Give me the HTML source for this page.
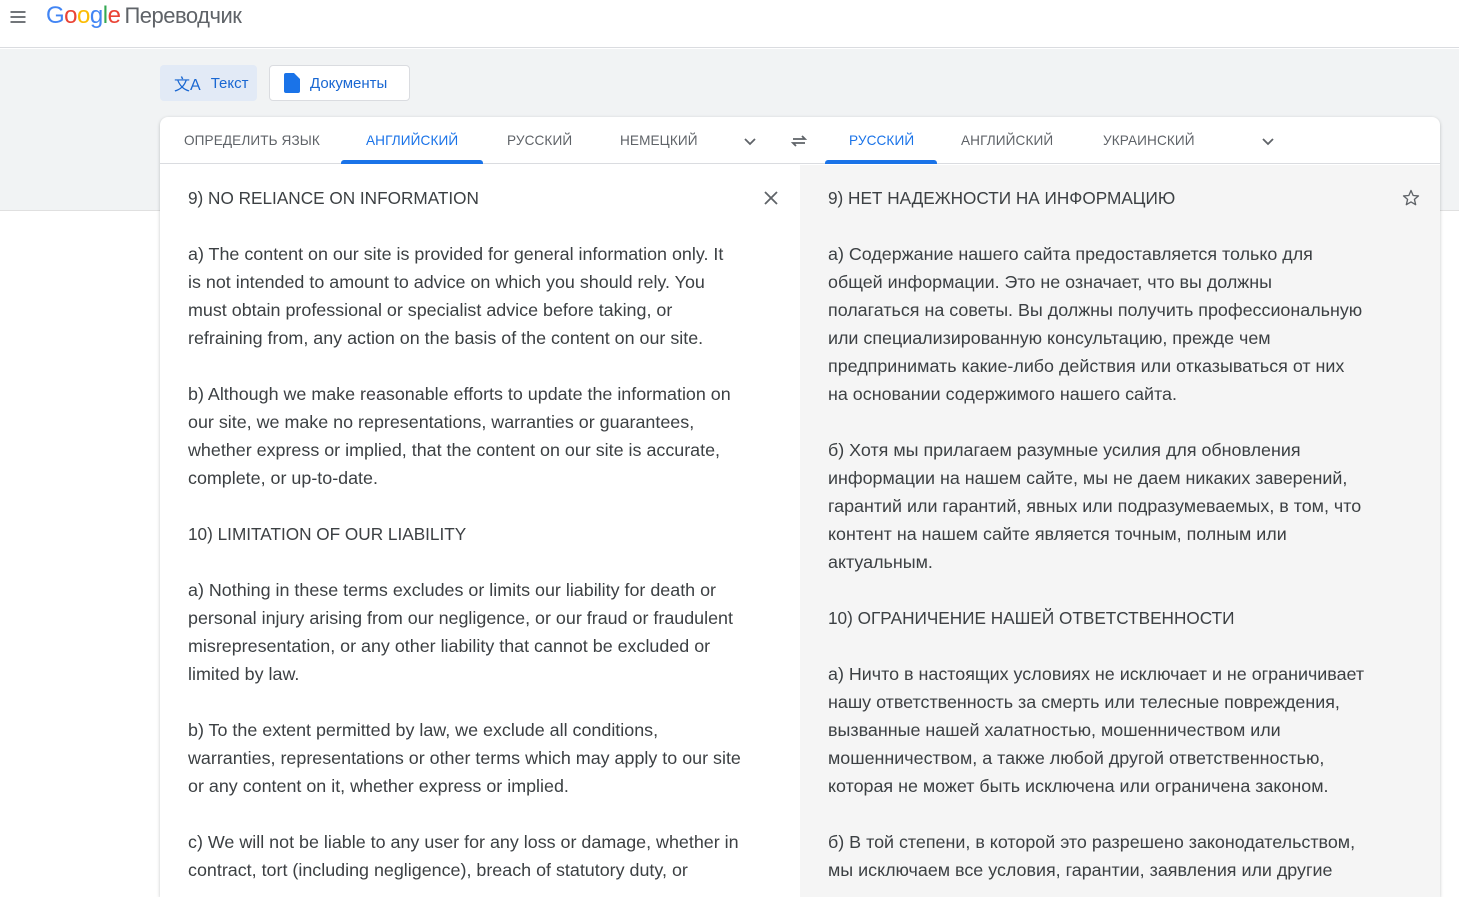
<!DOCTYPE html>
<html><head><meta charset="utf-8"><style>
*{margin:0;padding:0;box-sizing:border-box}
body{width:1459px;height:886px;overflow:hidden;background:#fff;font-family:"Liberation Sans",Roboto,sans-serif;position:relative}
.hdr{position:absolute;left:0;top:0;width:1459px;height:48px;background:#fff;border-bottom:1px solid #dadce0}
.band{position:absolute;left:0;top:49px;width:1459px;height:162px;background:#f1f3f4;border-bottom:1px solid #e0e0e0}
.btn{position:absolute;top:65px;height:36px;border-radius:4px;font-size:15px;color:#1967d2;display:flex;align-items:center}
.card{position:absolute;left:160px;top:117px;width:1280px;height:780px;background:#fff;border-radius:8px 8px 0 0;box-shadow:0 1px 3px rgba(60,64,67,.3);overflow:hidden}
.tabs{position:absolute;left:0;top:0;width:1280px;height:47px;border-bottom:1px solid #dadce0}
.tab{position:absolute;top:16px;font-size:13.6px;color:#5f6368;letter-spacing:.1px}
.tab.a{color:#1a73e8}
.ul{position:absolute;top:43px;height:4px;background:#1a73e8;border-radius:3px 3px 0 0}
.right{position:absolute;left:640px;top:48px;width:640px;height:740px;background:#f5f5f5}
.txt{position:absolute;font-size:17.9px;line-height:28px;color:#3c4043;white-space:pre}
.h{font-size:17.2px}
</style></head><body>
<div class="hdr">
<svg style="position:absolute;left:8px;top:7px" width="20" height="20" viewBox="0 0 24 24"><path d="M3 6h18M3 12h18M3 18h18" stroke="#5f6368" stroke-width="2"/></svg>
<div style="position:absolute;left:46px;top:2px;font-size:24px;letter-spacing:-0.5px"><span style="color:#4285f4">G</span><span style="color:#ea4335">o</span><span style="color:#fbbc05">o</span><span style="color:#4285f4">g</span><span style="color:#34a853">l</span><span style="color:#ea4335">e</span><span style="color:#5f6368;font-size:22px;margin-left:4px">Переводчик</span></div>
</div>
<div class="band"></div>
<div class="btn" style="left:160px;width:97px;background:#e2eaf6;padding-left:14px"><span style="font-size:16px;margin-right:10px">文A</span>Текст</div>
<div class="btn" style="left:269px;width:141px;background:#fff;border:1px solid #dadce0;padding-left:14px"><svg width="16" height="20" viewBox="0 0 16 20"><path d="M2 0h8l6 6v12a2 2 0 0 1-2 2H2a2 2 0 0 1-2-2V2a2 2 0 0 1 2-2z" fill="#1a73e8"/></svg><span style="margin-left:10px">Документы</span></div>
<div class="card">
<div class="tabs">
<div class="tab" style="left:24px">ОПРЕДЕЛИТЬ ЯЗЫК</div>
<div class="tab a" style="left:206px">АНГЛИЙСКИЙ</div><div class="ul" style="left:181px;width:142px"></div>
<div class="tab" style="left:347px">РУССКИЙ</div>
<div class="tab" style="left:460px">НЕМЕЦКИЙ</div>
<svg style="position:absolute;left:582px;top:16px" width="16" height="16" viewBox="0 0 16 16"><path d="M3 6l5 5 5-5" stroke="#5f6368" stroke-width="1.8" fill="none"/></svg>
<svg style="position:absolute;left:630px;top:15px" width="18" height="18" viewBox="0 0 18 18"><path d="M3 7h12l-3-3M15 11H3l3 3" stroke="#5f6368" stroke-width="1.8" fill="none"/></svg>
<div class="tab a" style="left:689px">РУССКИЙ</div><div class="ul" style="left:665px;width:112px"></div>
<div class="tab" style="left:801px">АНГЛИЙСКИЙ</div>
<div class="tab" style="left:943px">УКРАИНСКИЙ</div>
<svg style="position:absolute;left:1100px;top:16px" width="16" height="16" viewBox="0 0 16 16"><path d="M3 6l5 5 5-5" stroke="#5f6368" stroke-width="1.8" fill="none"/></svg>
</div>
<div class="right"></div>
<svg style="position:absolute;left:603px;top:73px" width="16" height="16" viewBox="0 0 16 16"><path d="M2 2l12 12M14 2L2 14" stroke="#5f6368" stroke-width="1.8"/></svg>
<svg style="position:absolute;left:1241px;top:71px" width="20" height="20" viewBox="0 0 24 24"><path d="M12 3l2.6 6 6.4.5-4.9 4.2 1.5 6.3L12 16.7 6.4 20l1.5-6.3L3 9.5 9.4 9z" stroke="#5f6368" stroke-width="1.6" fill="none" stroke-linejoin="round"/></svg>
<div class="txt" style="left:28px;top:67px"><span class="h">9) NO RELIANCE ON INFORMATION</span>

a) The content on our site is provided for general information only. It
is not intended to amount to advice on which you should rely. You
must obtain professional or specialist advice before taking, or
refraining from, any action on the basis of the content on our site.

b) Although we make reasonable efforts to update the information on
our site, we make no representations, warranties or guarantees,
whether express or implied, that the content on our site is accurate,
complete, or up-to-date.

<span class="h">10) LIMITATION OF OUR LIABILITY</span>

a) Nothing in these terms excludes or limits our liability for death or
personal injury arising from our negligence, or our fraud or fraudulent
misrepresentation, or any other liability that cannot be excluded or
limited by law.

b) To the extent permitted by law, we exclude all conditions,
warranties, representations or other terms which may apply to our site
or any content on it, whether express or implied.

c) We will not be liable to any user for any loss or damage, whether in
contract, tort (including negligence), breach of statutory duty, or</div>
<div class="txt" style="left:668px;top:67px"><span class="h">9) НЕТ НАДЕЖНОСТИ НА ИНФОРМАЦИЮ</span>

а) Содержание нашего сайта предоставляется только для
общей информации. Это не означает, что вы должны
полагаться на советы. Вы должны получить профессиональную
или специализированную консультацию, прежде чем
предпринимать какие-либо действия или отказываться от них
на основании содержимого нашего сайта.

б) Хотя мы прилагаем разумные усилия для обновления
информации на нашем сайте, мы не даем никаких заверений,
гарантий или гарантий, явных или подразумеваемых, в том, что
контент на нашем сайте является точным, полным или
актуальным.

<span class="h">10) ОГРАНИЧЕНИЕ НАШЕЙ ОТВЕТСТВЕННОСТИ</span>

а) Ничто в настоящих условиях не исключает и не ограничивает
нашу ответственность за смерть или телесные повреждения,
вызванные нашей халатностью, мошенничеством или
мошенничеством, а также любой другой ответственностью,
которая не может быть исключена или ограничена законом.

б) В той степени, в которой это разрешено законодательством,
мы исключаем все условия, гарантии, заявления или другие</div>
</div>
</body></html>
